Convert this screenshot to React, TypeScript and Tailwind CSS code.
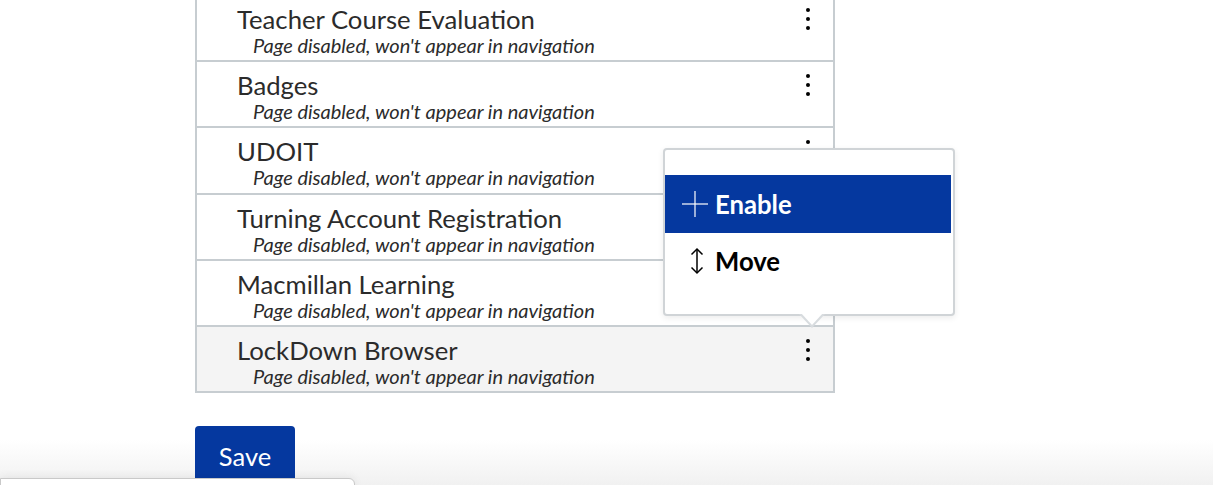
interface Item {
  title: string;
  hover?: boolean;
}

const items: Item[] = [
  { title: 'Teacher Course Evaluation' },
  { title: 'Badges' },
  { title: 'UDOIT' },
  { title: 'Turning Account Registration' },
  { title: 'Macmillan Learning' },
  { title: 'LockDown Browser', hover: true },
];

function Kebab() {
  return (
    <svg width="6" height="24" viewBox="0 0 6 24" className="text-black">
      <circle cx="3" cy="3" r="2" fill="currentColor" />
      <circle cx="3" cy="12" r="2" fill="currentColor" />
      <circle cx="3" cy="21" r="2" fill="currentColor" />
    </svg>
  );
}

function PlusIcon() {
  return (
    <svg width="26" height="26" viewBox="0 0 26 26" fill="none" stroke="currentColor" strokeWidth="1.2">
      <path d="M13 0 L13 26" />
      <path d="M0 13 L26 13" />
    </svg>
  );
}

function UpDown() {
  return (
    <svg width="14" height="28" viewBox="0 0 14 28" fill="none" stroke="currentColor" strokeWidth="1.5">
      <path d="M7 2 L7 26" />
      <path d="M1.5 7.5 L7 2 L12.5 7.5" />
      <path d="M1.5 20.5 L7 26 L12.5 20.5" />
    </svg>
  );
}

export default function App() {
  return (
    <div className="relative h-[485px] w-[1213px] overflow-hidden bg-white" style={{ fontFamily: 'Lato, "Open Sans", sans-serif' }}>
      <div className="absolute bottom-0 left-0 right-0 h-[45px] bg-gradient-to-b from-white/0 to-[#f1f1f1]" />

      <div className="relative z-10 pl-[195px] -mt-[6px]">
        <ul className="w-[640px] border-l-2 border-r-2 border-[#c7cdd1]">
          {items.map((item) => (
            <li
              key={item.title}
              className={`flex h-[66.2px] items-start justify-between border-t-2 border-b-0 border-[#c7cdd1] last:border-b-2 last:h-[68px] pl-[40px] pr-[22px] ${item.hover ? 'bg-[#f4f4f4]' : 'bg-white'}`}
            >
              <div className="pt-[9px] text-[#2b2b2b]">
                <p className="text-[25.7px] leading-[28px]">{item.title}</p>
                <p className="pl-[16px] text-[20px] italic leading-[24px]">Page disabled, won't appear in navigation</p>
              </div>
              <div className="pt-[11px]">
                <Kebab />
              </div>
            </li>
          ))}
        </ul>

        <button className="mt-[33px] h-[62px] w-[100px] rounded-[4px] bg-[#05389f] pb-[2px] text-[25.5px] text-white">
          Save
        </button>
      </div>

      <div className="absolute left-[663px] top-[148px] z-20 w-[292px] rounded-[4px] border-2 border-[#d0d4d7] bg-white py-[25px] pr-[2px] shadow-[0_2px_6px_rgba(0,0,0,0.08)]">
        <div className="flex h-[58px] items-center bg-[#05389f] pl-[17px] text-white">
          <PlusIcon />
          <span className="ml-[7px] text-[25.7px] font-bold">Enable</span>
        </div>
        <div className="flex h-[56px] items-center pl-[25px] text-black">
          <UpDown />
          <span className="ml-[11px] text-[25.7px] font-bold">Move</span>
        </div>
        <div className="absolute -bottom-[14px] left-[134px] h-0 w-0 border-l-[13px] border-r-[13px] border-t-[14px] border-l-transparent border-r-transparent border-t-[#d8dcdf]" />
        <div className="absolute -bottom-[11px] left-[136px] h-0 w-0 border-l-[11px] border-r-[11px] border-t-[12px] border-l-transparent border-r-transparent border-t-white" />
      </div>

      <div className="absolute bottom-[-10px] left-0 z-30 h-[17px] w-[355px] rounded-tr-[6px] border border-[#c9c9c9] bg-white shadow-[0_-2px_8px_rgba(0,0,0,0.06)]" />
    </div>
  );
}
